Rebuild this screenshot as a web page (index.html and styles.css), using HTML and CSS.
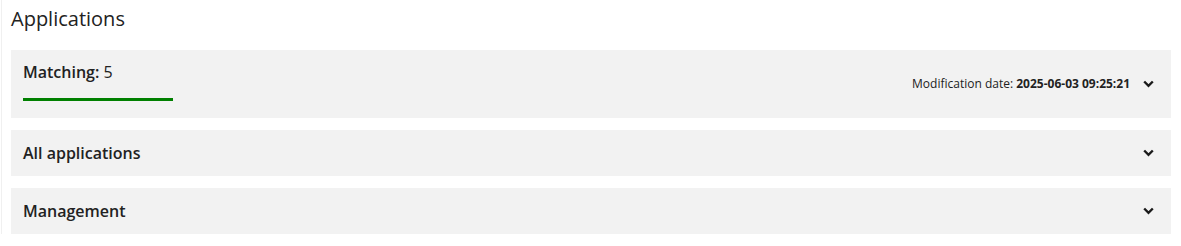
FILE: index.html
```html
<!DOCTYPE html>
<html lang="en">
<head>
    <meta charset="UTF-8">
    <title>Applications</title>
    <link rel="stylesheet" href="styles.css">
</head>
<body>
    <div class="page">
        <h2 class="page-title">Applications</h2>

        <div class="panel panel-tall">
            <div class="tab">
                <span class="tab-label"><b>Matching:</b> 5</span>
                <span class="tab-bar"></span>
            </div>
            <div class="panel-right">
                <span class="mod-date">Modification date: <b>2025-06-03 09:25:21</b></span>
                <svg class="chevron" viewBox="0 0 11 8" width="11" height="8"><path d="M1.2 1.5 L5.5 5.8 L9.8 1.5" fill="none" stroke="#1a1a1a" stroke-width="2.4"/></svg>
            </div>
        </div>

        <div class="panel">
            <span class="panel-title">All applications</span>
            <svg class="chevron" viewBox="0 0 11 8" width="11" height="8"><path d="M1.2 1.5 L5.5 5.8 L9.8 1.5" fill="none" stroke="#1a1a1a" stroke-width="2.4"/></svg>
        </div>

        <div class="panel">
            <span class="panel-title">Management</span>
            <svg class="chevron" viewBox="0 0 11 8" width="11" height="8"><path d="M1.2 1.5 L5.5 5.8 L9.8 1.5" fill="none" stroke="#1a1a1a" stroke-width="2.4"/></svg>
        </div>
    </div>
</body>
</html>
```

FILE: styles.css
```css
body { margin: 0; font-family: "Open Sans", sans-serif; color: #222; background: #fff; }

.page { border-left: 1px solid #f0f0f0; margin-left: 1px; padding: 0 10px 0 9px; }

.page-title { margin: 0; padding-top: 6px; height: 50px; box-sizing: border-box; font-size: 20px; font-weight: normal; line-height: 26px; color: #222; }

.panel { display: flex; justify-content: space-between; align-items: center; background: #f2f2f2; height: 46px; margin-bottom: 12px; padding: 0 17px 0 12px; box-sizing: border-box; }

.panel-tall { height: 68px; align-items: stretch; }

.tab { display: flex; flex-direction: column; padding-top: 11px; }

.tab-label { font-size: 16px; line-height: 23px; }

.tab-label b { font-weight: 600; }

.tab-bar { display: block; width: 150px; height: 3px; background: #008000; margin-top: 14px; }

.panel-right { display: flex; align-items: center; gap: 13px; padding-top: 26px; height: 16px; }

.mod-date { font-size: 12px; line-height: 16px; }

.panel-title { font-size: 16px; font-weight: 600; }

.chevron { display: block; }
```
